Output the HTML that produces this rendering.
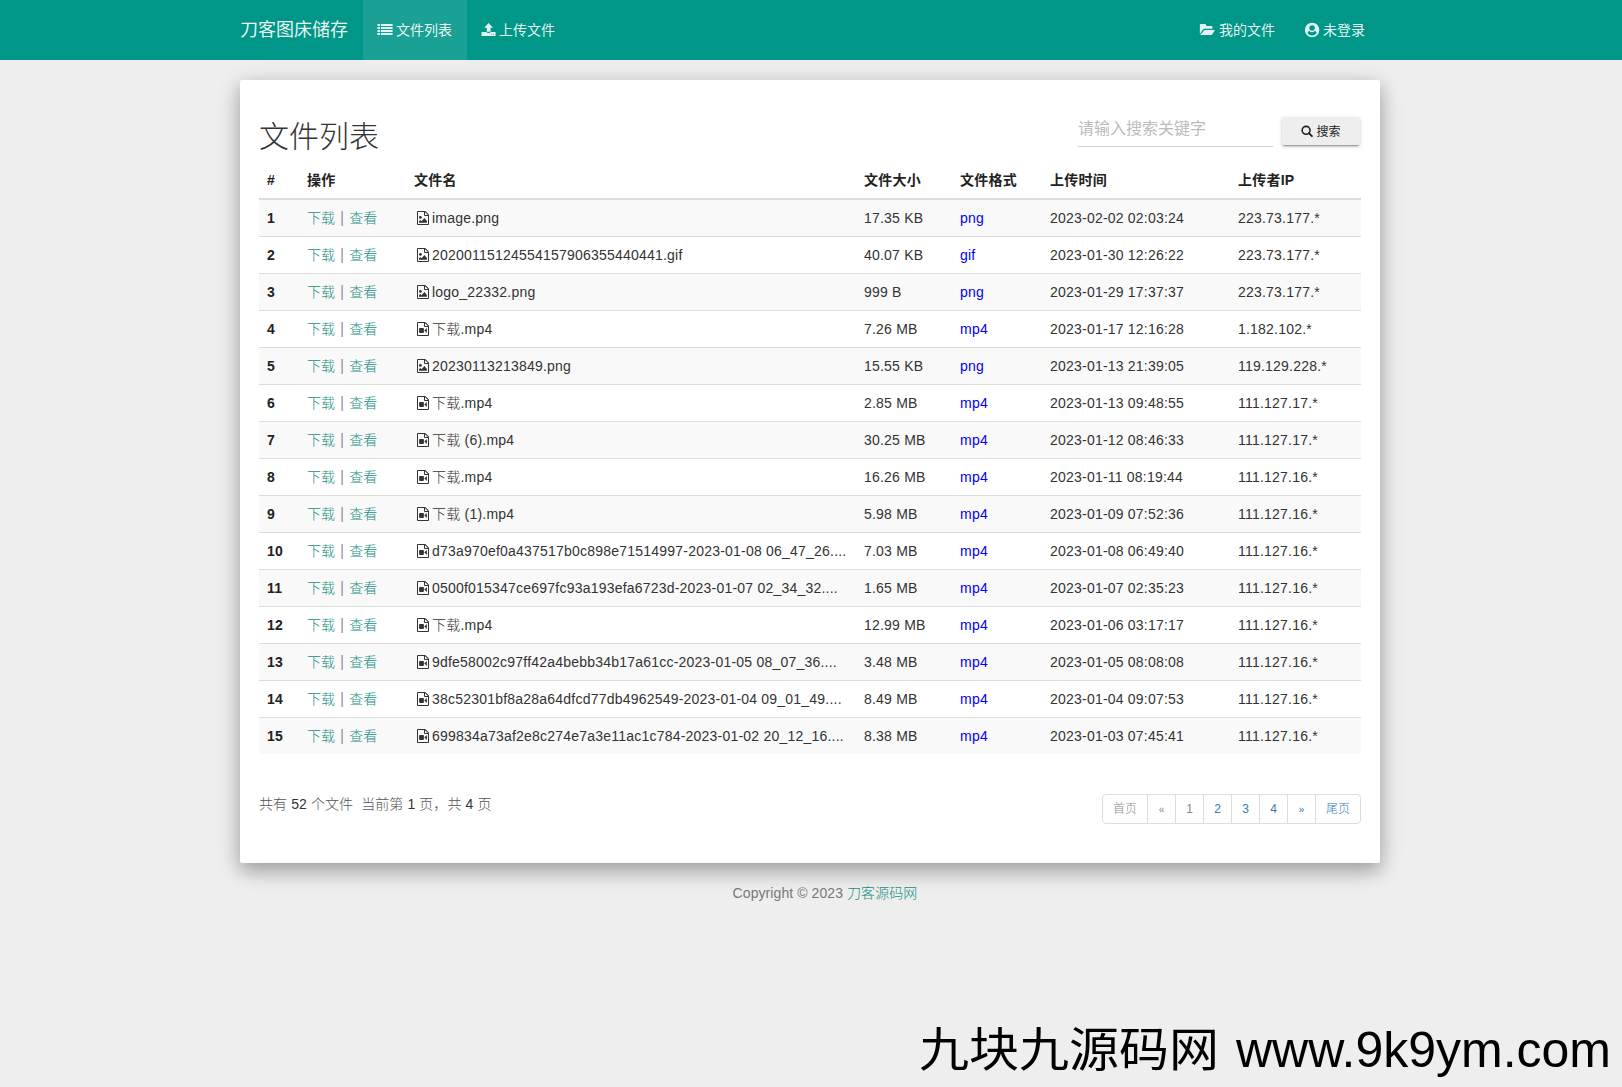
<!DOCTYPE html>
<html lang="zh-CN">
<head>
<meta charset="utf-8">
<title>文件列表 - 刀客图床储存</title>
<style>
*{box-sizing:border-box}
html,body{margin:0;padding:0}
body{width:1622px;height:1087px;overflow:hidden;background:#eee;font-family:"Liberation Sans","Noto Sans CJK SC",sans-serif;font-size:14px;line-height:20px;color:#333;position:relative}
a{text-decoration:none;color:#4a9e8f}
.navbar{position:absolute;left:0;top:0;width:1622px;height:60px;background:#009688;color:#fff}
.nav-inner{position:absolute;left:226px;top:0;width:1170px;height:60px}
.brand{position:absolute;left:14px;top:0;height:60px;line-height:60px;font-size:18px;color:rgba(255,255,255,.92);white-space:nowrap}
.nav-item{position:absolute;top:0;height:60px;line-height:60px;font-size:14px;color:rgba(255,255,255,.92);white-space:nowrap;padding:0 15px}
.nav-item.active{background:rgba(255,255,255,.1)}
.nav-item .sp{display:inline-block;width:18px;height:1px}
.navicons{position:absolute;left:0;top:0}
.card{position:absolute;left:240px;top:80px;width:1140px;height:783px;background:#fff;box-shadow:0 8px 17px rgba(0,0,0,.2),0 6px 25px rgba(0,0,0,.19);border-radius:2px}
h1{position:absolute;left:19px;top:37px;margin:0;font-size:30px;font-weight:300;line-height:40px;color:#333;white-space:nowrap}
.search{position:absolute;left:838px;top:35px;width:195px;height:32px;border-bottom:1px solid #d2d2d2;font-size:16px;color:#bbb;line-height:28px;white-space:nowrap}
.btn{position:absolute;left:1042px;top:37px;width:78px;height:28px;background:#eee;border-radius:2px;box-shadow:0 2px 2px 0 rgba(0,0,0,.14),0 3px 1px -2px rgba(0,0,0,.2),0 1px 5px 0 rgba(0,0,0,.12);font-size:12px;line-height:28px;text-align:center;color:#222;white-space:nowrap}
.btn svg{display:inline-block;vertical-align:middle;margin-right:3px;position:relative;top:-1px}
.btn span{position:relative;top:1px}
table{position:absolute;left:19px;top:81px;width:1102px;border-collapse:collapse;table-layout:fixed}
th,td{padding:0 8px;text-align:left;white-space:nowrap;overflow:hidden;height:37px;line-height:20px;vertical-align:middle;font-size:14px;letter-spacing:.214px}
thead th{height:38px;border-bottom:2px solid #ddd;font-weight:700;color:#222}
tbody tr{height:37px}
tbody th,tbody td{border-top:1px solid #ddd}
tbody tr:first-child th,tbody tr:first-child td{border-top:0}
tbody tr:nth-child(odd){background:#f9f9f9}
tbody th{font-weight:700;color:#222}
tbody td{font-weight:300}
td.op{color:#8a8a8a;word-spacing:1.4px;letter-spacing:0}
td.op a{color:#178f83;font-weight:300}
td.fn{padding-left:10px}
.bar{display:inline-block;transform:scaleY(1.2);transform-origin:50% 70%}
thead th:nth-child(3){padding-left:7px}
td.fmt{color:#00f}
.fi{width:12px;height:14px;display:inline-block;vertical-align:middle;margin-right:3px;position:relative;top:-1px}
.summary{position:absolute;left:19px;top:714px;font-size:14px;line-height:20px;color:#555;white-space:nowrap;font-weight:300;letter-spacing:.09px}
.summary b{font-weight:400;color:#333}
.footer a{font-weight:300;color:#178f83}
.pager{position:absolute;right:19px;top:714px;height:30px;display:flex;border:1px solid #ddd;border-radius:4px;background:#fff;font-size:12px;font-weight:300}
.pager .g{font-size:10px;line-height:30px}
.pager span{display:block;width:28px;text-align:center;height:28px;line-height:28px;border-left:1px solid #ddd;color:#337ab7;white-space:nowrap}
.pager span:first-child{width:44px}
.pager span:last-child{width:45px}
.pager span:first-child{border-left:0}
.pager span.dis{color:#888}
.footer{position:absolute;left:0;top:883px;width:1650px;letter-spacing:.08px;text-align:center;font-size:14px;line-height:20px;color:#777;white-space:nowrap}
.wm{position:absolute;right:11px;top:1018px;font-size:50px;line-height:64px;word-spacing:3px;color:#000;white-space:nowrap}
.wm span{display:inline-block;transform:scaleY(.925);transform-origin:50% 50%}
</style>
</head>
<body>
<div class="navbar"><div class="nav-inner">
<div class="brand">刀客图床储存</div>
<div class="nav-item active" style="left:137px"><i class="sp"></i>文件列表</div>
<div class="nav-item" style="left:240px"><i class="sp"></i>上传文件</div>
<div class="nav-item" style="left:959px"><i class="sp" style="width:19px"></i>我的文件</div>
<div class="nav-item" style="left:1064px"><i class="sp"></i>未登录</div>
</div>
<svg class="navicons" width="1622" height="60" viewBox="0 0 1622 60" fill="#fff" fill-opacity=".88">
<g transform="translate(377.5 24.05)"><path d="M0 0h2.500v1.850H0zM0 3h2.500v1.850H0zM0 6.050h2.500v1.850H0zM0 9.050h2.500v1.900H0zM3.400 0h11.700v1.850H3.400zM3.400 3h11.700v1.850H3.400zM3.400 6.050h11.700v1.850H3.400zM3.400 9.050h11.700v1.900H3.400z"/></g>
<g transform="translate(481.500 23)"><path d="M7.100 0L11.600 4.700H9.100V8.700H5.300V4.700H2.700Z"/><path fill-rule="evenodd" d="M0 9.100H4.700Q5.500 10.100 7.100 10.100Q8.700 10.100 9.400 9.100H14.100V12.900H0ZM9.600 11.500a.45.45 0 1 0 .9 0a.45.45 0 1 0-.9 0ZM11.600 11.500a.45.45 0 1 0 .9 0a.45.45 0 1 0-.9 0Z"/></g>
<g transform="translate(1199.850 23.950)"><path d="M0 1Q0 0 1 0H5.200Q6 0 6.200 .800L6.500 2.100H11.600Q12.600 2.100 12.600 3.100V4.800H4.600Q3.800 4.800 3.400 5.400L0 10Z"/><path d="M4.600 5.950H15.100L11.900 11.050H.300Z"/></g>
<g transform="translate(1312.100 30)"><path fill-rule="evenodd" d="M-7.250 0a7.250 7.250 0 1 0 14.500 0a7.250 7.250 0 1 0-14.500 0ZM-2.750-1.950a2.750 2.750 0 1 0 5.500 0a2.750 2.750 0 1 0-5.500 0ZM-4.500 3.300C-4.200 1.600-3.400 1-2.700 1A3.950 3.950 0 0 0 2.700 1C3.400 1 4.200 1.600 4.500 3.300A5.700 5.700 0 0 1-4.500 3.300Z"/></g>
</svg>
</div>
<div class="card">
<h1>文件列表</h1>
<div class="search">请输入搜索关键字</div>
<div class="btn"><svg width="12" height="12" viewBox="0 0 12 12"><circle cx="5.100" cy="5.300" r="3.950" fill="none" stroke="#222" stroke-width="1.600"/><path d="M7.900 8.100l3 3.100" stroke="#222" stroke-width="1.800" stroke-linecap="round"/></svg><span>搜索</span></div>
<table>
<colgroup><col style="width:40px"><col style="width:108px"><col style="width:449px"><col style="width:96px"><col style="width:90px"><col style="width:188px"><col style="width:131px"></colgroup>
<thead><tr><th>#</th><th>操作</th><th>文件名</th><th>文件大小</th><th>文件格式</th><th>上传时间</th><th>上传者IP</th></tr></thead>
<tbody>
<tr><th>1</th><td class="op"><a>下载</a> <span class="bar">|</span> <a>查看</a></td><td class="fn"><svg class="fi" viewBox="0 0 12 14"><path d="M0.5 0.5H8.2L11.5 3.800V13.500H0.500Z" fill="none" stroke="#333" stroke-width="1"/><path d="M7.500 0.500V4.500H11.500M8.100 0.600L11.400 3.900" fill="none" stroke="#333" stroke-width="1"/><circle cx="3.400" cy="6.400" r="1.400" fill="#333"/><path d="M2 11.700V10.300L3.300 9L4.600 10.300L7.400 7L9.900 9.900V11.700Z" fill="#333"/></svg>image.png</td><td>17.35 KB</td><td class="fmt">png</td><td>2023-02-02 02:03:24</td><td>223.73.177.*</td></tr>
<tr><th>2</th><td class="op"><a>下载</a> <span class="bar">|</span> <a>查看</a></td><td class="fn"><svg class="fi" viewBox="0 0 12 14"><path d="M0.5 0.5H8.2L11.5 3.800V13.500H0.500Z" fill="none" stroke="#333" stroke-width="1"/><path d="M7.500 0.500V4.500H11.500M8.100 0.600L11.400 3.900" fill="none" stroke="#333" stroke-width="1"/><circle cx="3.400" cy="6.400" r="1.400" fill="#333"/><path d="M2 11.700V10.300L3.300 9L4.600 10.300L7.400 7L9.900 9.900V11.700Z" fill="#333"/></svg>20200115124554157906355440441.gif</td><td>40.07 KB</td><td class="fmt">gif</td><td>2023-01-30 12:26:22</td><td>223.73.177.*</td></tr>
<tr><th>3</th><td class="op"><a>下载</a> <span class="bar">|</span> <a>查看</a></td><td class="fn"><svg class="fi" viewBox="0 0 12 14"><path d="M0.5 0.5H8.2L11.5 3.800V13.500H0.500Z" fill="none" stroke="#333" stroke-width="1"/><path d="M7.500 0.500V4.500H11.500M8.100 0.600L11.400 3.900" fill="none" stroke="#333" stroke-width="1"/><circle cx="3.400" cy="6.400" r="1.400" fill="#333"/><path d="M2 11.700V10.300L3.300 9L4.600 10.300L7.400 7L9.900 9.900V11.700Z" fill="#333"/></svg>logo_22332.png</td><td>999 B</td><td class="fmt">png</td><td>2023-01-29 17:37:37</td><td>223.73.177.*</td></tr>
<tr><th>4</th><td class="op"><a>下载</a> <span class="bar">|</span> <a>查看</a></td><td class="fn"><svg class="fi" viewBox="0 0 12 14"><path d="M0.500 0.500H8.200L11.500 3.800V13.500H0.500Z" fill="none" stroke="#333" stroke-width="1"/><path d="M7.500 0.500V4.500H11.500M8.100 0.600L11.400 3.900" fill="none" stroke="#333" stroke-width="1"/><rect x="2.100" y="5.900" width="4.800" height="5.100" rx="0.900" fill="#333"/><path d="M7.300 8.450L9.900 6V10.900Z" fill="#333"/></svg>下载.mp4</td><td>7.26 MB</td><td class="fmt">mp4</td><td>2023-01-17 12:16:28</td><td>1.182.102.*</td></tr>
<tr><th>5</th><td class="op"><a>下载</a> <span class="bar">|</span> <a>查看</a></td><td class="fn"><svg class="fi" viewBox="0 0 12 14"><path d="M0.5 0.5H8.2L11.5 3.800V13.500H0.500Z" fill="none" stroke="#333" stroke-width="1"/><path d="M7.500 0.500V4.500H11.500M8.100 0.600L11.400 3.900" fill="none" stroke="#333" stroke-width="1"/><circle cx="3.400" cy="6.400" r="1.400" fill="#333"/><path d="M2 11.700V10.300L3.300 9L4.600 10.300L7.400 7L9.900 9.900V11.700Z" fill="#333"/></svg>20230113213849.png</td><td>15.55 KB</td><td class="fmt">png</td><td>2023-01-13 21:39:05</td><td>119.129.228.*</td></tr>
<tr><th>6</th><td class="op"><a>下载</a> <span class="bar">|</span> <a>查看</a></td><td class="fn"><svg class="fi" viewBox="0 0 12 14"><path d="M0.500 0.500H8.200L11.500 3.800V13.500H0.500Z" fill="none" stroke="#333" stroke-width="1"/><path d="M7.500 0.500V4.500H11.500M8.100 0.600L11.400 3.900" fill="none" stroke="#333" stroke-width="1"/><rect x="2.100" y="5.900" width="4.800" height="5.100" rx="0.900" fill="#333"/><path d="M7.300 8.450L9.900 6V10.900Z" fill="#333"/></svg>下载.mp4</td><td>2.85 MB</td><td class="fmt">mp4</td><td>2023-01-13 09:48:55</td><td>111.127.17.*</td></tr>
<tr><th>7</th><td class="op"><a>下载</a> <span class="bar">|</span> <a>查看</a></td><td class="fn"><svg class="fi" viewBox="0 0 12 14"><path d="M0.500 0.500H8.200L11.500 3.800V13.500H0.500Z" fill="none" stroke="#333" stroke-width="1"/><path d="M7.500 0.500V4.500H11.500M8.100 0.600L11.400 3.900" fill="none" stroke="#333" stroke-width="1"/><rect x="2.100" y="5.900" width="4.800" height="5.100" rx="0.900" fill="#333"/><path d="M7.300 8.450L9.900 6V10.900Z" fill="#333"/></svg>下载 (6).mp4</td><td>30.25 MB</td><td class="fmt">mp4</td><td>2023-01-12 08:46:33</td><td>111.127.17.*</td></tr>
<tr><th>8</th><td class="op"><a>下载</a> <span class="bar">|</span> <a>查看</a></td><td class="fn"><svg class="fi" viewBox="0 0 12 14"><path d="M0.500 0.500H8.200L11.500 3.800V13.500H0.500Z" fill="none" stroke="#333" stroke-width="1"/><path d="M7.500 0.500V4.500H11.500M8.100 0.600L11.400 3.900" fill="none" stroke="#333" stroke-width="1"/><rect x="2.100" y="5.900" width="4.800" height="5.100" rx="0.900" fill="#333"/><path d="M7.300 8.450L9.900 6V10.900Z" fill="#333"/></svg>下载.mp4</td><td>16.26 MB</td><td class="fmt">mp4</td><td>2023-01-11 08:19:44</td><td>111.127.16.*</td></tr>
<tr><th>9</th><td class="op"><a>下载</a> <span class="bar">|</span> <a>查看</a></td><td class="fn"><svg class="fi" viewBox="0 0 12 14"><path d="M0.500 0.500H8.200L11.500 3.800V13.500H0.500Z" fill="none" stroke="#333" stroke-width="1"/><path d="M7.500 0.500V4.500H11.500M8.100 0.600L11.400 3.900" fill="none" stroke="#333" stroke-width="1"/><rect x="2.100" y="5.900" width="4.800" height="5.100" rx="0.900" fill="#333"/><path d="M7.300 8.450L9.900 6V10.900Z" fill="#333"/></svg>下载 (1).mp4</td><td>5.98 MB</td><td class="fmt">mp4</td><td>2023-01-09 07:52:36</td><td>111.127.16.*</td></tr>
<tr><th>10</th><td class="op"><a>下载</a> <span class="bar">|</span> <a>查看</a></td><td class="fn"><svg class="fi" viewBox="0 0 12 14"><path d="M0.500 0.500H8.200L11.500 3.800V13.500H0.500Z" fill="none" stroke="#333" stroke-width="1"/><path d="M7.500 0.500V4.500H11.500M8.100 0.600L11.400 3.900" fill="none" stroke="#333" stroke-width="1"/><rect x="2.100" y="5.900" width="4.800" height="5.100" rx="0.900" fill="#333"/><path d="M7.300 8.450L9.900 6V10.900Z" fill="#333"/></svg>d73a970ef0a437517b0c898e71514997-2023-01-08 06_47_26....</td><td>7.03 MB</td><td class="fmt">mp4</td><td>2023-01-08 06:49:40</td><td>111.127.16.*</td></tr>
<tr><th>11</th><td class="op"><a>下载</a> <span class="bar">|</span> <a>查看</a></td><td class="fn"><svg class="fi" viewBox="0 0 12 14"><path d="M0.500 0.500H8.200L11.500 3.800V13.500H0.500Z" fill="none" stroke="#333" stroke-width="1"/><path d="M7.500 0.500V4.500H11.500M8.100 0.600L11.400 3.900" fill="none" stroke="#333" stroke-width="1"/><rect x="2.100" y="5.900" width="4.800" height="5.100" rx="0.900" fill="#333"/><path d="M7.300 8.450L9.900 6V10.900Z" fill="#333"/></svg>0500f015347ce697fc93a193efa6723d-2023-01-07 02_34_32....</td><td>1.65 MB</td><td class="fmt">mp4</td><td>2023-01-07 02:35:23</td><td>111.127.16.*</td></tr>
<tr><th>12</th><td class="op"><a>下载</a> <span class="bar">|</span> <a>查看</a></td><td class="fn"><svg class="fi" viewBox="0 0 12 14"><path d="M0.500 0.500H8.200L11.500 3.800V13.500H0.500Z" fill="none" stroke="#333" stroke-width="1"/><path d="M7.500 0.500V4.500H11.500M8.100 0.600L11.400 3.900" fill="none" stroke="#333" stroke-width="1"/><rect x="2.100" y="5.900" width="4.800" height="5.100" rx="0.900" fill="#333"/><path d="M7.300 8.450L9.900 6V10.900Z" fill="#333"/></svg>下载.mp4</td><td>12.99 MB</td><td class="fmt">mp4</td><td>2023-01-06 03:17:17</td><td>111.127.16.*</td></tr>
<tr><th>13</th><td class="op"><a>下载</a> <span class="bar">|</span> <a>查看</a></td><td class="fn"><svg class="fi" viewBox="0 0 12 14"><path d="M0.500 0.500H8.200L11.500 3.800V13.500H0.500Z" fill="none" stroke="#333" stroke-width="1"/><path d="M7.500 0.500V4.500H11.500M8.100 0.600L11.400 3.900" fill="none" stroke="#333" stroke-width="1"/><rect x="2.100" y="5.900" width="4.800" height="5.100" rx="0.900" fill="#333"/><path d="M7.300 8.450L9.900 6V10.900Z" fill="#333"/></svg>9dfe58002c97ff42a4bebb34b17a61cc-2023-01-05 08_07_36....</td><td>3.48 MB</td><td class="fmt">mp4</td><td>2023-01-05 08:08:08</td><td>111.127.16.*</td></tr>
<tr><th>14</th><td class="op"><a>下载</a> <span class="bar">|</span> <a>查看</a></td><td class="fn"><svg class="fi" viewBox="0 0 12 14"><path d="M0.500 0.500H8.200L11.500 3.800V13.500H0.500Z" fill="none" stroke="#333" stroke-width="1"/><path d="M7.500 0.500V4.500H11.500M8.100 0.600L11.400 3.900" fill="none" stroke="#333" stroke-width="1"/><rect x="2.100" y="5.900" width="4.800" height="5.100" rx="0.900" fill="#333"/><path d="M7.300 8.450L9.900 6V10.900Z" fill="#333"/></svg>38c52301bf8a28a64dfcd77db4962549-2023-01-04 09_01_49....</td><td>8.49 MB</td><td class="fmt">mp4</td><td>2023-01-04 09:07:53</td><td>111.127.16.*</td></tr>
<tr><th>15</th><td class="op"><a>下载</a> <span class="bar">|</span> <a>查看</a></td><td class="fn"><svg class="fi" viewBox="0 0 12 14"><path d="M0.500 0.500H8.200L11.500 3.800V13.500H0.500Z" fill="none" stroke="#333" stroke-width="1"/><path d="M7.500 0.500V4.500H11.500M8.100 0.600L11.400 3.900" fill="none" stroke="#333" stroke-width="1"/><rect x="2.100" y="5.900" width="4.800" height="5.100" rx="0.900" fill="#333"/><path d="M7.300 8.450L9.900 6V10.900Z" fill="#333"/></svg>699834a73af2e8c274e7a3e11ac1c784-2023-01-02 20_12_16....</td><td>8.38 MB</td><td class="fmt">mp4</td><td>2023-01-03 07:45:41</td><td>111.127.16.*</td></tr>
</tbody>
</table>
<div class="summary">共有 <b>52</b> 个文件&nbsp; 当前第 <b>1</b> 页，共 <b>4</b> 页</div>
<div class="pager"><span class="dis">首页</span><span class="dis g">«</span><span class="dis">1</span><span>2</span><span>3</span><span>4</span><span class="g">»</span><span>尾页</span></div>
</div>
<div class="footer">Copyright © 2023 <a>刀客源码网</a></div>
<div class="wm"><span>九块九源码网</span> www.9k9ym.com</div>
</body>
</html>
